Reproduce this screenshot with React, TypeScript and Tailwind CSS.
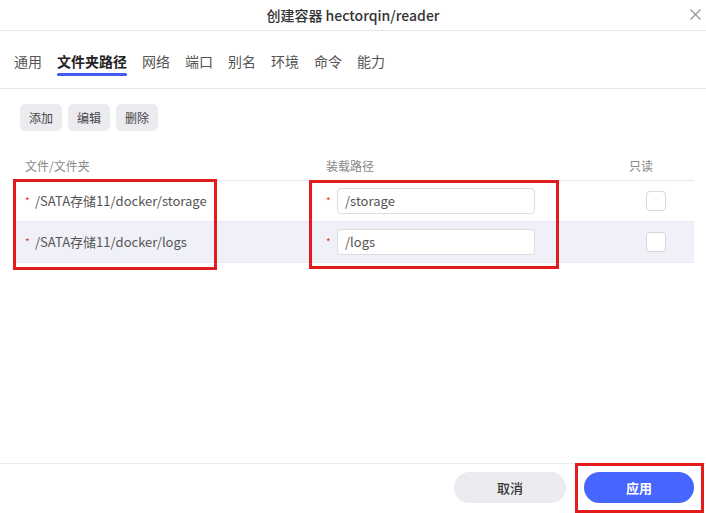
import React from "react";

const font = { fontFamily: '"Noto Sans CJK SC", "Noto Sans", sans-serif' };

const tabs = ["通用", "文件夹路径", "网络", "端口", "别名", "环境", "命令", "能力"];
const rows = [
  { path: "/SATA存储11/docker/storage", mount: "/storage" },
  { path: "/SATA存储11/docker/logs", mount: "/logs" },
];

export default function App() {
  return (
    <div style={font} className="relative w-[706px] h-[513px] bg-white flex flex-col overflow-hidden text-[#333]">
      <div className="relative h-[31px] shrink-0 border-b border-[#e6e6eb] flex items-center justify-center">
        <span className="text-[14px] font-medium text-[#333] leading-none">创建容器 hectorqin/reader</span>
        <svg className="absolute right-[4px] top-[8px]" width="13" height="13" viewBox="0 0 13 13">
          <path d="M1.5 1.5 L11.5 11.5 M11.5 1.5 L1.5 11.5" stroke="#999" strokeWidth="1.4" />
        </svg>
      </div>
      <div className="h-[58px] shrink-0 border-b border-[#e6e6eb] flex items-start gap-[15px] pl-[14px] pt-[19px]">
        {tabs.map((t, i) => (
          <div key={t} className="flex flex-col items-center">
            <span className={"text-[14px] leading-[22px] " + (i === 1 ? "font-bold text-[#222]" : "text-[#555]")}>{t}</span>
            <div className={"mt-[1px] h-[3px] w-full rounded-full " + (i === 1 ? "bg-[#3f5ef0]" : "bg-transparent")} />
          </div>
        ))}
      </div>
      <div className="flex-1 flex flex-col">
        <div className="flex gap-[6px] pl-[20px] pt-[15px]">
          {["添加", "编辑", "删除"].map((b) => (
            <div key={b} className="h-[27px] px-[9px] rounded-[5px] bg-[#ebebf0] flex items-center text-[12px] text-[#444]">{b}</div>
          ))}
        </div>
        <div className="mx-[14px] mt-[20px] w-[680px]">
          <div className="h-[30px] border-b border-[#e8e8ee] flex items-center text-[12px] text-[#888]">
            <div className="w-[299px] pl-[11px]">文件/文件夹</div>
            <div className="w-[304px] pl-[13px]">装载路径</div>
            <div className="flex-1 pl-[12px]">只读</div>
          </div>
          {rows.map((r, i) => (
            <div key={r.path} className={"h-[41px] border-b border-[#e8e8ee] flex items-center text-[13px] text-[#555] " + (i === 1 ? "bg-[#f0f1f8]" : "bg-white")}>
              <div className="w-[299px] pl-[11px] flex items-center">
                <span className="text-[#e5322d] text-[10px] w-[10px] -mt-[2px]">*</span>
                <span>{r.path}</span>
              </div>
              <div className="w-[304px] pl-[13px] flex items-center">
                <span className="text-[#e5322d] text-[10px] w-[11px] -mt-[2px]">*</span>
                <div className="w-[198px] h-[26px] rounded-[4px] border border-[#dcdce2] bg-white flex items-center pl-[7px] text-[13px] text-[#555]">{r.mount}</div>
              </div>
              <div className="flex-1 flex justify-center">
                <div className="w-[20px] h-[20px] rounded-[4px] border border-[#d6d6dc] bg-white" />
              </div>
            </div>
          ))}
        </div>
      </div>
      <div className="h-[50px] shrink-0 border-t border-[#ececf0] flex items-start justify-end gap-[18px] pr-[12px] pt-[8px]">
        <div className="w-[112px] h-[31px] rounded-full bg-[#ebebf0] flex items-center justify-center text-[13px] text-[#333] font-medium">取消</div>
        <div className="w-[110px] h-[31px] rounded-full bg-[#4766ff] flex items-center justify-center text-[13px] text-white font-bold">应用</div>
      </div>
      <div className="absolute left-[13px] top-[179px] w-[204px] h-[91px] border-[3px] border-[#e21c1c]" />
      <div className="absolute left-[309px] top-[180px] w-[250px] h-[89px] border-[3px] border-[#e21c1c]" />
      <div className="absolute left-[575px] top-[463px] w-[129px] h-[50px] border-[3px] border-[#e21c1c]" />
    </div>
  );
}
